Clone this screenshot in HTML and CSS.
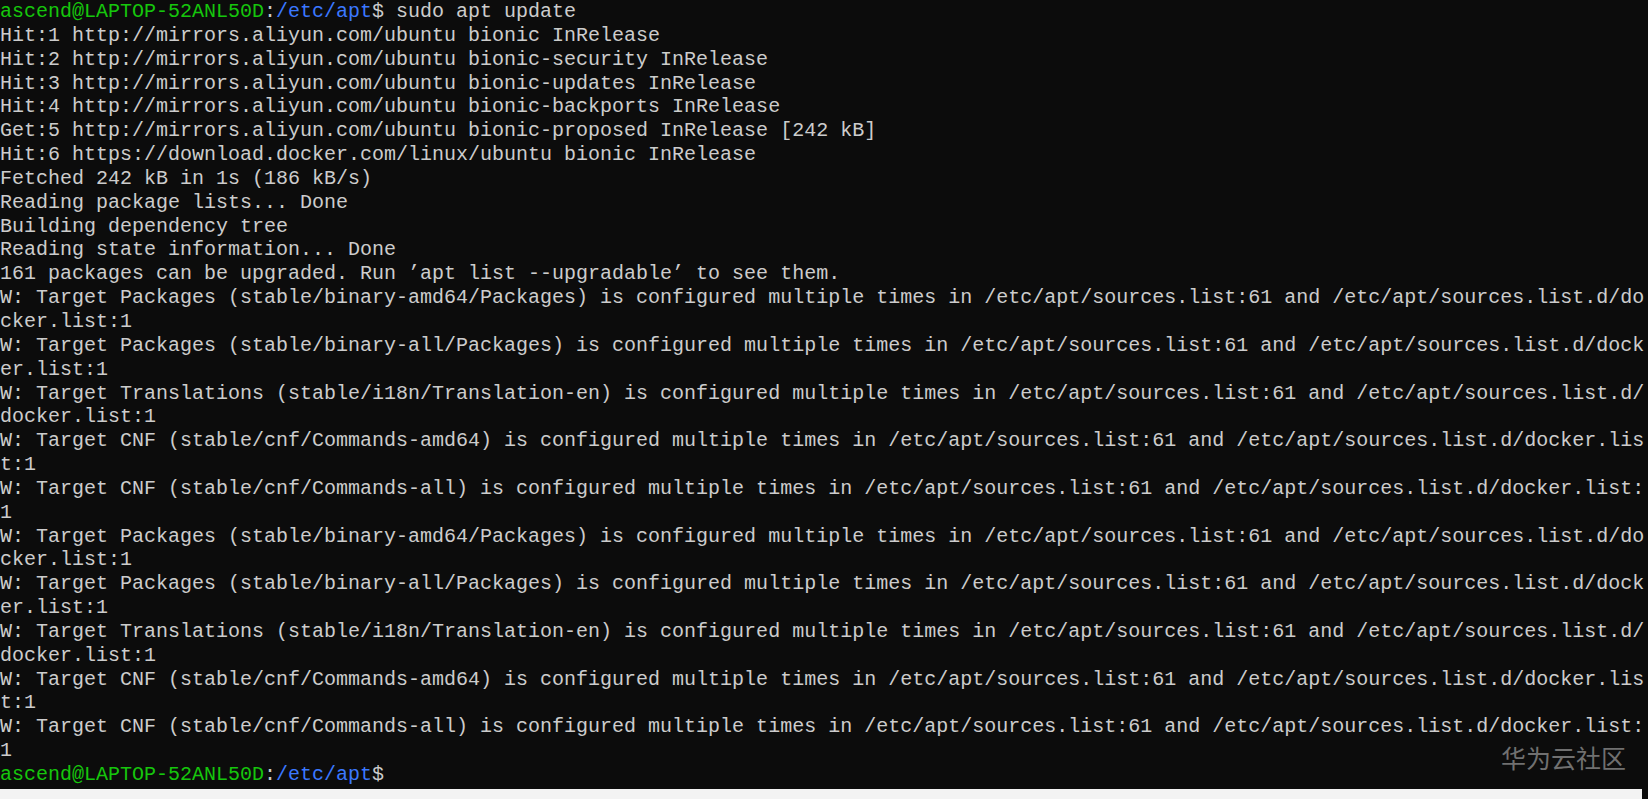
FILE: index.html
```html
<!DOCTYPE html>
<html>
<head>
<meta charset="utf-8">
<link rel="stylesheet" href="styles.css">
</head>
<body>
<div class="screen">
<div class="term">
<div class="ln"><span class="g">ascend@LAPTOP-52ANL50D</span>:<span class="b">/etc/apt</span>$ sudo apt update</div>
<div class="ln">Hit:1 http://mirrors.aliyun.com/ubuntu bionic InRelease</div>
<div class="ln">Hit:2 http://mirrors.aliyun.com/ubuntu bionic-security InRelease</div>
<div class="ln">Hit:3 http://mirrors.aliyun.com/ubuntu bionic-updates InRelease</div>
<div class="ln">Hit:4 http://mirrors.aliyun.com/ubuntu bionic-backports InRelease</div>
<div class="ln">Get:5 http://mirrors.aliyun.com/ubuntu bionic-proposed InRelease [242 kB]</div>
<div class="ln">Hit:6 https://download.docker.com/linux/ubuntu bionic InRelease</div>
<div class="ln">Fetched 242 kB in 1s (186 kB/s)</div>
<div class="ln">Reading package lists... Done</div>
<div class="ln">Building dependency tree</div>
<div class="ln">Reading state information... Done</div>
<div class="ln">161 packages can be upgraded. Run ’apt list --upgradable’ to see them.</div>
<div class="ln">W: Target Packages (stable/binary-amd64/Packages) is configured multiple times in /etc/apt/sources.list:61 and /etc/apt/sources.list.d/do</div>
<div class="ln">cker.list:1</div>
<div class="ln">W: Target Packages (stable/binary-all/Packages) is configured multiple times in /etc/apt/sources.list:61 and /etc/apt/sources.list.d/dock</div>
<div class="ln">er.list:1</div>
<div class="ln">W: Target Translations (stable/i18n/Translation-en) is configured multiple times in /etc/apt/sources.list:61 and /etc/apt/sources.list.d/</div>
<div class="ln">docker.list:1</div>
<div class="ln">W: Target CNF (stable/cnf/Commands-amd64) is configured multiple times in /etc/apt/sources.list:61 and /etc/apt/sources.list.d/docker.lis</div>
<div class="ln">t:1</div>
<div class="ln">W: Target CNF (stable/cnf/Commands-all) is configured multiple times in /etc/apt/sources.list:61 and /etc/apt/sources.list.d/docker.list:</div>
<div class="ln">1</div>
<div class="ln">W: Target Packages (stable/binary-amd64/Packages) is configured multiple times in /etc/apt/sources.list:61 and /etc/apt/sources.list.d/do</div>
<div class="ln">cker.list:1</div>
<div class="ln">W: Target Packages (stable/binary-all/Packages) is configured multiple times in /etc/apt/sources.list:61 and /etc/apt/sources.list.d/dock</div>
<div class="ln">er.list:1</div>
<div class="ln">W: Target Translations (stable/i18n/Translation-en) is configured multiple times in /etc/apt/sources.list:61 and /etc/apt/sources.list.d/</div>
<div class="ln">docker.list:1</div>
<div class="ln">W: Target CNF (stable/cnf/Commands-amd64) is configured multiple times in /etc/apt/sources.list:61 and /etc/apt/sources.list.d/docker.lis</div>
<div class="ln">t:1</div>
<div class="ln">W: Target CNF (stable/cnf/Commands-all) is configured multiple times in /etc/apt/sources.list:61 and /etc/apt/sources.list.d/docker.list:</div>
<div class="ln">1</div>
<div class="ln"><span class="g">ascend@LAPTOP-52ANL50D</span>:<span class="b">/etc/apt</span>$</div>
<div class="wm">华为云社区</div>
</div>
<div class="bottom">
<div class="strip"></div>
</div>
</div>
</body>
</html>
```

FILE: styles.css
```css
html, body {
  margin: 0;
  padding: 0;
  background: #0c0c0c;
}
.screen {
  width: 1648px;
  height: 799px;
  display: flex;
  flex-direction: column;
  overflow: hidden;
}
.term {
  position: relative;
  height: 789px;
  overflow: hidden;
  font-family: "Liberation Mono", monospace;
  font-size: 20px;
  line-height: 23.85px;
  color: #cccccc;
}
.ln {
  white-space: pre;
  height: 23.85px;
}
.g { color: #16c60c; }
.b { color: #3b78ff; }
.wm {
  position: absolute;
  right: 22px;
  top: 742px;
  font-family: "Noto Sans CJK SC", sans-serif;
  font-size: 25px;
  line-height: 30px;
  color: #707070;
}
.bottom {
  height: 10px;
  display: flex;
}
.strip {
  width: 1642px;
  background: #f3f3f3;
}
```
